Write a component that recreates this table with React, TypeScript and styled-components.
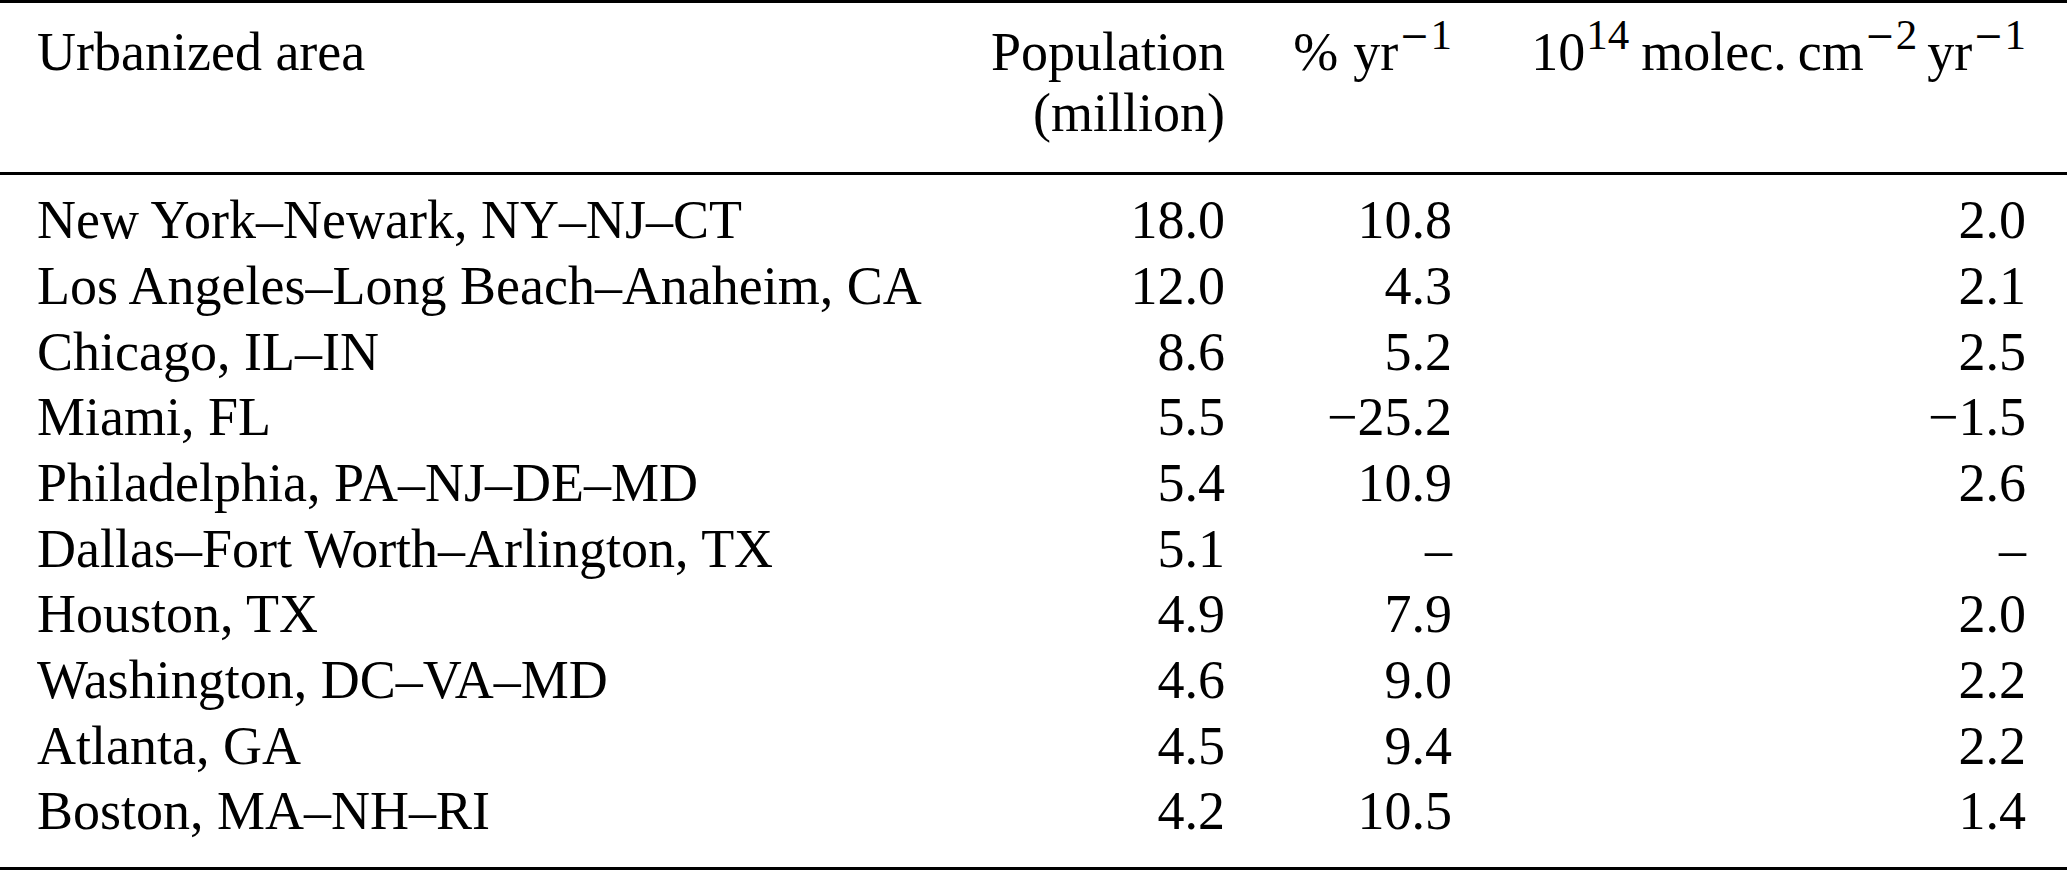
import React from "react";
import styled, { createGlobalStyle } from "styled-components";

const GlobalStyle = createGlobalStyle`
  html, body {
    margin: 0;
    padding: 0;
    background: #ffffff;
  }
  body {
    font-family: "Liberation Serif", "Times New Roman", serif;
    color: #000000;
  }
`;

const Page = styled.div`
  width: 2067px;
  height: 870px;
  background: #ffffff;
  display: flex;
  flex-direction: column;
  font-size: 54px;
`;

const Rule = styled.div`
  height: 3px;
  background: #000000;
  flex: none;
`;

const Grid = styled.div<{ $lh: number; $pt: number; $pb: number }>`
  display: grid;
  grid-template-columns: minmax(0, 1fr) 300px 227px 574px;
  padding: ${(p) => p.$pt}px 41px ${(p) => p.$pb}px 37px;
  line-height: ${(p) => p.$lh}px;
  flex: none;
`;

const Cell = styled.div<{ $align?: "left" | "right" }>`
  text-align: ${(p) => p.$align ?? "right"};
  white-space: nowrap;
`;

const Sup = styled.span`
  font-size: 43px;
  line-height: 0;
  vertical-align: 21px;
  margin-left: 1px;
`;

const SupMinus = styled.span`
  font-family: "DejaVu Serif", "Liberation Serif", serif;
  font-size: 36px;
  vertical-align: 1px;
  margin-right: 1px;
`;

const Space = styled.span<{ $w: number }>`
  display: inline-block;
  width: ${(p) => p.$w}px;
`;

type Row = [string, string, string, string];

const rows: Row[] = [
  ["New York–Newark, NY–NJ–CT", "18.0", "10.8", "2.0"],
  ["Los Angeles–Long Beach–Anaheim, CA", "12.0", "4.3", "2.1"],
  ["Chicago, IL–IN", "8.6", "5.2", "2.5"],
  ["Miami, FL", "5.5", "\u221225.2", "\u22121.5"],
  ["Philadelphia, PA–NJ–DE–MD", "5.4", "10.9", "2.6"],
  ["Dallas–Fort Worth–Arlington, TX", "5.1", "–", "–"],
  ["Houston, TX", "4.9", "7.9", "2.0"],
  ["Washington, DC–VA–MD", "4.6", "9.0", "2.2"],
  ["Atlanta, GA", "4.5", "9.4", "2.2"],
  ["Boston, MA–NH–RI", "4.2", "10.5", "1.4"],
];

const NegExp = ({ n }: { n: string }) => (
  <Sup>
    <SupMinus>{"\u2212"}</SupMinus>
    {n}
  </Sup>
);

export default function App() {
  return (
    <>
      <GlobalStyle />
      <Page>
        <Rule />
        <Grid $lh={60.7} $pt={19} $pb={28.5}>
          <Cell $align="left">Urbanized area</Cell>
          <Cell>
            Population
            <br />
            (million)
          </Cell>
          <Cell>
            %<Space $w={15} />yr<NegExp n="1" />
          </Cell>
          <Cell>
            10<Sup>14</Sup>
            <Space $w={12} />molec.<Space $w={11} />cm<NegExp n="2" />
            <Space $w={10} />yr<NegExp n="1" />
          </Cell>
        </Grid>
        <Rule />
        <Grid $lh={65.7} $pt={13.2} $pb={22}>
          {rows.map((r) => (
            <React.Fragment key={r[0]}>
              <Cell $align="left">{r[0]}</Cell>
              <Cell>{r[1]}</Cell>
              <Cell>{r[2]}</Cell>
              <Cell>{r[3]}</Cell>
            </React.Fragment>
          ))}
        </Grid>
        <Rule />
      </Page>
    </>
  );
}
